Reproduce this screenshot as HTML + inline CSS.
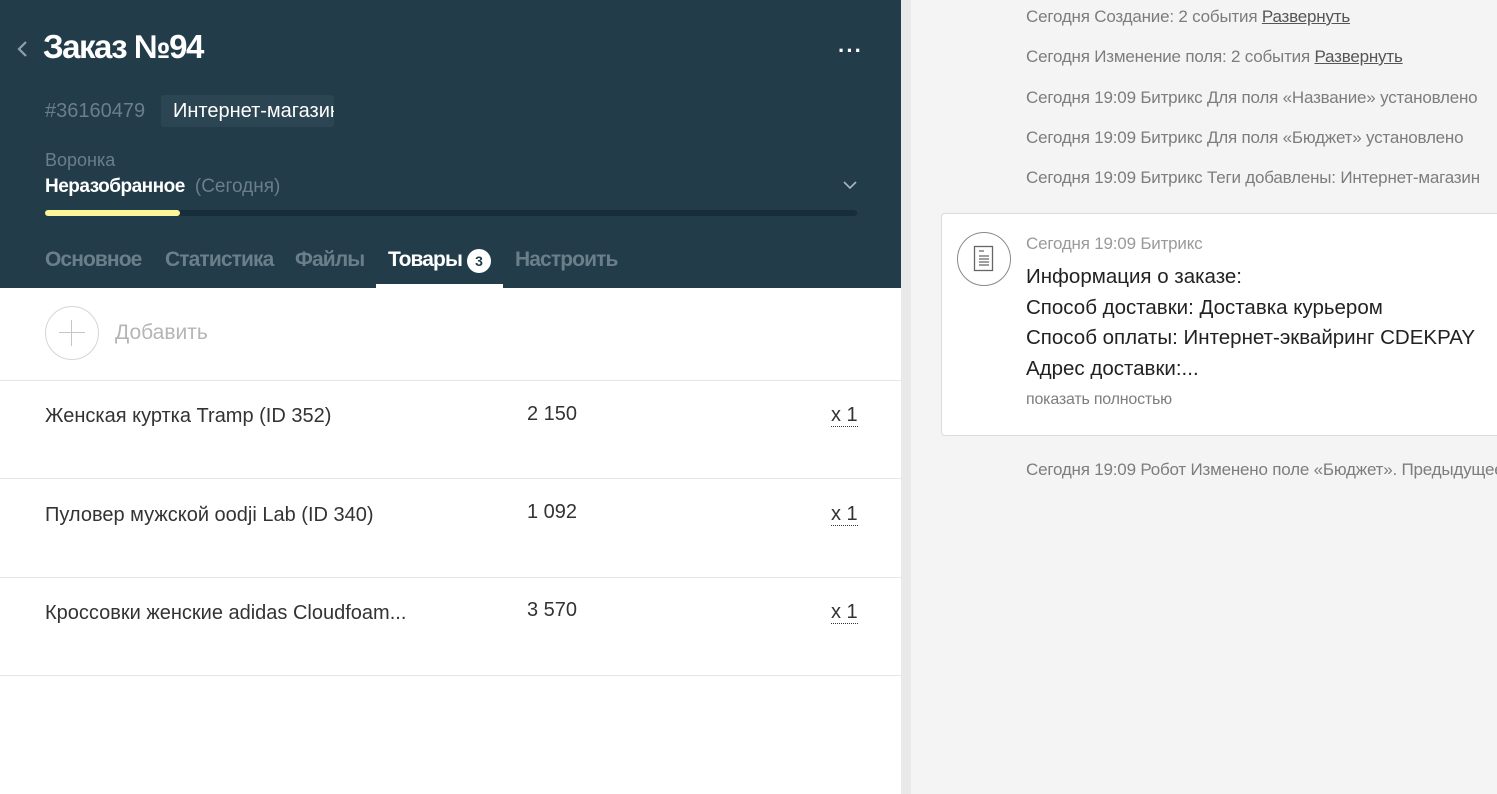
<!DOCTYPE html>
<html><head><meta charset="utf-8"><style>
*{margin:0;padding:0;box-sizing:border-box}
body{width:1497px;height:794px;overflow:hidden;background:#f4f4f4;font-family:"Liberation Sans","DejaVu Sans",sans-serif;position:relative}
.left{position:absolute;left:0;top:0;width:901px;height:794px;background:#fff}
.head{position:absolute;left:0;top:0;width:901px;height:288px;background:#223c4a}
.strip{position:absolute;left:901px;top:0;width:10px;height:794px;background:#e9e9e9}
.a{position:absolute;white-space:nowrap}
.tab{position:absolute;top:248px;font-size:21px;font-weight:bold;color:#6a7f89;letter-spacing:-0.9px}
.row{position:absolute;left:0;width:901px;border-top:1px solid #e6e6e6}
.pn{font-size:20px;color:#333}
.q{font-size:20px;color:#333;border-bottom:1px dotted #333;line-height:22px}
.ev{position:absolute;left:1026px;font-size:17px;color:#7d7d7d;white-space:nowrap;letter-spacing:-0.2px}
.ev u{color:#555}
</style></head><body>
<div class="left"></div>
<div class="head"></div>
<div class="strip"></div>
<svg class="a" style="left:15px;top:39px" width="14" height="20"><path d="M11 3 L4 10 L11 17" stroke="#8fa0a8" stroke-width="2.2" fill="none"/></svg>
<div class="a" style="left:43px;top:28px;font-size:33px;font-weight:bold;color:#fff;letter-spacing:-1.5px">Заказ №94</div>
<div class="a" style="left:838px;top:38px;font-size:22px;color:#fff;letter-spacing:1px;font-weight:bold">···</div>
<div class="a" style="left:45px;top:100px;font-size:20px;color:#6a7f89">#36160479</div>
<div class="a" style="left:161px;top:95px;width:173px;height:32px;background:#2b4553;border-radius:3px;overflow:hidden;color:#fff;font-size:20px;padding:5px 0 0 12px">Интернет-магазин</div>
<div class="a" style="left:45px;top:150px;font-size:18px;color:#6a7f89">Воронка</div>
<div class="a" style="left:45px;top:176px;font-size:19px;color:#fff;font-weight:bold;letter-spacing:-0.5px">Неразобранное <span style="font-weight:normal;color:#6a7f89;letter-spacing:0">&nbsp;(Сегодня)</span></div>
<svg class="a" style="left:842px;top:179px" width="16" height="12"><path d="M2 3 L8 9 L14 3" stroke="#a9b6bc" stroke-width="1.6" fill="none"/></svg>
<div class="a" style="left:45px;top:210px;width:812px;height:6px;background:#172d39;border-radius:3px"></div>
<div class="a" style="left:45px;top:210px;width:135px;height:6px;background:#fff59a;border-radius:3px"></div>
<div class="tab" style="left:45px">Основное</div>
<div class="tab" style="left:165px">Статистика</div>
<div class="tab" style="left:295px">Файлы</div>
<div class="tab" style="left:388px;color:#fff">Товары</div>
<div class="a" style="left:467px;top:249px;width:24px;height:24px;border-radius:50%;background:#fff;color:#223c4a;font-size:14px;font-weight:bold;text-align:center;line-height:24px">3</div>
<div class="tab" style="left:515px">Настроить</div>
<div class="a" style="left:376px;top:284px;width:127px;height:4px;background:#fff"></div>
<div class="a" style="left:45px;top:306px;width:54px;height:54px;border:1px solid #d6d6d6;border-radius:50%"></div>
<div class="a" style="left:59px;top:332px;width:26px;height:1px;background:#c6c6c6"></div>
<div class="a" style="left:71px;top:320px;width:1px;height:26px;background:#c6c6c6"></div>
<div class="a" style="left:115px;top:321px;font-size:21px;color:#b5b5b5">Добавить</div>
<div class="row" style="top:380px"></div>
<div class="row" style="top:478px"></div>
<div class="row" style="top:577px"></div>
<div class="row" style="top:675px"></div>
<div class="a pn" style="left:45px;top:405px">Женская куртка Tramp (ID 352)</div>
<div class="a pn" style="left:527px;top:403px">2 150</div>
<div class="a q" style="left:831px;top:404px">x 1</div>
<div class="a pn" style="left:45px;top:504px">Пуловер мужской oodji Lab (ID 340)</div>
<div class="a pn" style="left:527px;top:501px">1 092</div>
<div class="a q" style="left:831px;top:503px">x 1</div>
<div class="a pn" style="left:45px;top:602px">Кроссовки женские adidas Cloudfoam...</div>
<div class="a pn" style="left:527px;top:599px">3 570</div>
<div class="a q" style="left:831px;top:601px">x 1</div>
<div class="ev" style="top:7px">Сегодня Создание: 2 события <u>Развернуть</u></div>
<div class="ev" style="top:47px">Сегодня Изменение поля: 2 события <u>Развернуть</u></div>
<div class="ev" style="top:88px">Сегодня 19:09 Битрикс Для поля «Название» установлено</div>
<div class="ev" style="top:128px">Сегодня 19:09 Битрикс Для поля «Бюджет» установлено</div>
<div class="ev" style="top:168px">Сегодня 19:09 Битрикс Теги добавлены: Интернет-магазин</div>
<div class="a" style="left:941px;top:213px;width:570px;height:223px;background:#fff;border:1px solid #dcdcdc;border-radius:4px"></div>
<div class="a" style="left:957px;top:232px;width:54px;height:54px;border:1px solid #8a8a8a;border-radius:50%"></div>
<svg class="a" style="left:972px;top:245px" width="24" height="28"><rect x="2.5" y="1.5" width="18" height="24" fill="none" stroke="#666" stroke-width="1.3"/><path d="M7 6h5M7 11h10M7 14h10M7 17h10M7 20h10" stroke="#666" stroke-width="1.3"/></svg>
<div class="ev" style="top:234px;color:#9a9a9a">Сегодня 19:09 Битрикс</div>
<div class="a" style="left:1026px;top:262px;font-size:20.5px;color:#222;line-height:30.5px">Информация о заказе:<br>Способ доставки: Доставка курьером<br>Способ оплаты: Интернет-эквайринг CDEKPAY<br>Адрес доставки:...</div>
<div class="ev" style="top:391px;font-size:16px">показать полностью</div>
<div class="ev" style="top:460px">Сегодня 19:09 Робот Изменено поле «Бюджет». Предыдущее</div>
</body></html>
